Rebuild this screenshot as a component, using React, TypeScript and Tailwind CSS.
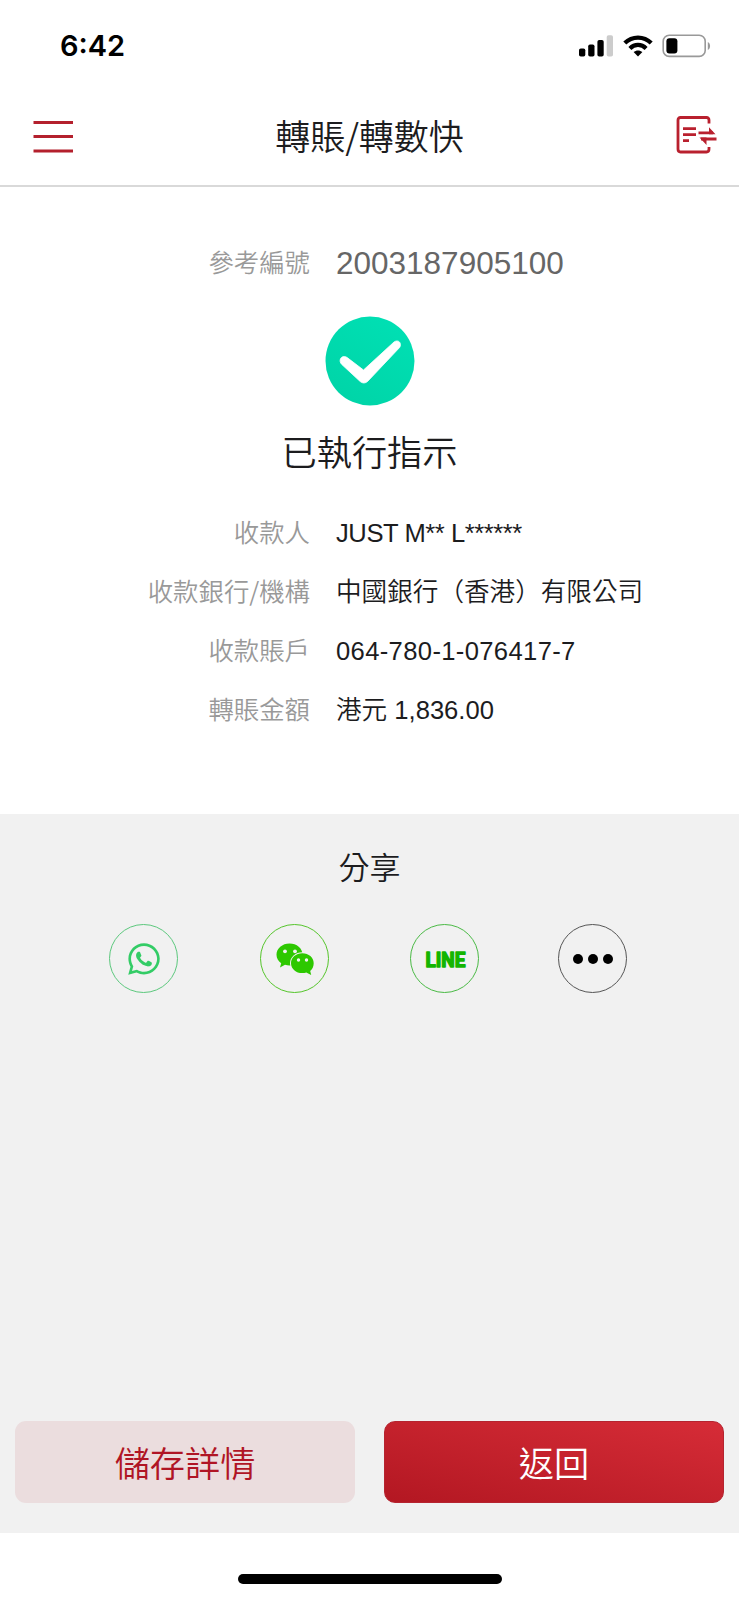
import { FaWhatsapp } from 'react-icons/fa';

const details = [
  { label: '收款人', value: 'JUST M** L******', spacing: 'tracking-[-0.45px]' },
  { label: '收款銀行/機構', value: '中國銀行（香港）有限公司', spacing: 'tracking-normal' },
  { label: '收款賬戶', value: '064-780-1-076417-7', spacing: 'tracking-[0.35px]' },
  { label: '轉賬金額', value: '港元 1,836.00', spacing: 'tracking-normal' },
];

export default function App() {
  return (
    <div className="flex h-[1600px] w-[739px] flex-col overflow-hidden bg-white font-['Liberation_Sans','Noto_Sans_CJK_TC',sans-serif] text-[#1c1c1e]">
      <StatusBar />
      <Header />

      <main className="flex h-[627px] shrink-0 flex-col pt-[57px]">
        <div className="flex h-10 items-center gap-[26px]">
          <span className="w-[310px] pb-[5px] text-right font-['Noto_Sans_CJK_TC',sans-serif] text-[25.4px] font-[350] text-[#999]">
            參考編號
          </span>
          <span className="text-[31.5px] text-[#666]">2003187905100</span>
        </div>

        <div className="mt-[32px] flex flex-col items-center">
          <SuccessIcon />
          <h2 className="mt-[20px] font-['Noto_Sans_CJK_TC',sans-serif] text-[35.2px] leading-[50px] font-[350]">
            已執行指示
          </h2>
        </div>

        <dl className="mt-[27px]">
          {details.map((row) => (
            <div key={row.label} className="flex h-[59px] items-center gap-[26px]">
              <dt className="w-[310px] pb-[2px] text-right font-['Noto_Sans_CJK_TC',sans-serif] text-[25.4px] font-[350] text-[#999]">
                {row.label}
              </dt>
              <dd className={`pt-px text-[25.6px] font-[350] whitespace-nowrap ${row.spacing}`}>{row.value}</dd>
            </div>
          ))}
        </dl>
      </main>

      <section className="flex h-[719px] shrink-0 flex-col bg-[#f1f1f1] px-[15px] pb-[30px]">
        <h3 className="mt-[27px] text-center font-['Noto_Sans_CJK_TC',sans-serif] text-[31px] leading-[50px] font-[350]">
          分享
        </h3>
        <div className="mt-[33px] flex pl-[94px]">
          <button className="flex size-[69px] items-center justify-center rounded-full border border-[#5cc87d]">
            <FaWhatsapp className="size-9 text-[#33cc66]" />
          </button>
          <button className="ml-[82px] flex size-[69px] items-center justify-center rounded-full border border-[#55c52b]">
            <WeChatIcon />
          </button>
          <button className="ml-[81px] flex size-[69px] items-center justify-center rounded-full border border-[#4aba45]">
            <svg className="shrink-0" width="66" height="40" viewBox="0 0 66 40">
              <text
                x="33.5"
                y="27.5"
                textAnchor="middle"
                textLength="40"
                lengthAdjust="spacingAndGlyphs"
                fill="#13b500"
                stroke="#13b500"
                strokeWidth="1.5"
                strokeLinejoin="round"
                className="font-['Roboto',sans-serif] text-[21px] font-bold"
              >
                LINE
              </text>
            </svg>
          </button>
          <button className="ml-[79px] flex size-[69px] items-center justify-center gap-[5px] rounded-full border border-[#555]">
            <span className="size-[10px] rounded-full bg-black" />
            <span className="size-[10px] rounded-full bg-black" />
            <span className="size-[10px] rounded-full bg-black" />
          </button>
        </div>

        <div className="mt-auto flex justify-between">
          <button className="h-[82px] w-[340px] rounded-[11px] bg-[#ebddde] font-['Noto_Sans_CJK_TC',sans-serif] text-[35.2px] leading-[50px] font-[350] text-[#b01525]">
            儲存詳情
          </button>
          <button className="h-[82px] w-[340px] rounded-[11px] border border-[#b52430] bg-linear-to-tr from-[#b31722] to-[#d62c37] font-['Noto_Sans_CJK_TC',sans-serif] text-[35.2px] leading-[50px] font-[350] text-white">
            返回
          </button>
        </div>
      </section>

      <div className="flex flex-1 justify-center pt-[41px]">
        <div className="h-[10px] w-[264px] rounded-full bg-black" />
      </div>
    </div>
  );
}

function StatusBar() {
  return (
    <div className="flex h-[92px] shrink-0 items-center justify-between pr-[27px] pl-[60px]">
      <span className="font-['Inter',sans-serif] text-[29px] font-semibold text-black">6:42</span>
      <div className="flex items-center">
        <svg width="34" height="22" viewBox="0 0 34 22">
          <rect x="0" y="13.5" width="6.3" height="8" rx="1.8" />
          <rect x="9.2" y="9.5" width="6.3" height="12" rx="1.8" />
          <rect x="18.4" y="5" width="6.3" height="16.5" rx="1.8" />
          <rect x="27.7" y="0.3" width="6.3" height="21.2" rx="1.8" fill="#ccc" />
        </svg>
        <svg className="ml-[10px]" width="30" height="22" viewBox="0 0 30 22" fill="none" stroke="#000">
          <path d="M1.8 8.1C9.2.7 20.8.7 28.2 8.1" strokeWidth="4.2" />
          <path d="M6.9 13.4C11.5 8.8 18.5 8.8 23.1 13.4" strokeWidth="4.2" />
          <path d="M15 21.5 10.6 17.1C13.1 15 16.9 15 19.4 17.1Z" fill="#000" stroke="none" />
        </svg>
        <svg className="ml-[9px]" width="50" height="24" viewBox="0 0 50 24">
          <rect x="1.2" y="1.2" width="42" height="21.2" rx="6" fill="none" stroke="#999" strokeWidth="1.6" />
          <rect x="4.4" y="4.2" width="11" height="15.2" rx="3" />
          <path d="M45.8 8C48.8 9.3 48.8 14.7 45.8 16Z" fill="#999" />
        </svg>
      </div>
    </div>
  );
}

function Header() {
  return (
    <header className="flex h-[95px] shrink-0 items-center border-b-2 border-[#d9d9d9] pr-[22px] pb-1 pl-[33px]">
      <svg width="40" height="34" viewBox="0 0 40 34" stroke="#b4202d" strokeWidth="2.8">
        <path d="M.5 2.5H40M.5 16.5H40M.5 31H40" />
      </svg>
      <h1 className="flex-1 pr-[10px] pb-[3px] text-center font-['Noto_Sans_CJK_TC',sans-serif] text-[35px] leading-[50px] font-[350]">
        轉賬/轉數快
      </h1>
      <svg className="-mt-[3px]" width="41" height="40" viewBox="0 0 41 40" fill="none" stroke="#b9202e" strokeWidth="2.8">
        <path d="M33 8.5V5Q33 2.5 30.5 2.5H4.500Q2 2.500 2 5V34Q2 37 4.500 37H30.500Q33 37 33 34V32" />
        <path d="M7 13.7H20M7 19.7H20M7 25.7H13" />
        <path d="M22.500 17.800H37M25 24H40.500" />
        <path d="M33 12.200 39.500 19.200H33ZM30.500 30 23.500 22.600H30.500Z" fill="#b9202e" stroke="none" />
      </svg>
    </header>
  );
}

function SuccessIcon() {
  return (
    <svg width="90" height="90" viewBox="0 0 90 90">
      <defs>
        <linearGradient id="success" x1="0.8" y1="0" x2="0.2" y2="1">
          <stop offset="0" stopColor="#00e0b4" />
          <stop offset="1" stopColor="#00d4a7" />
        </linearGradient>
      </defs>
      <circle cx="45" cy="45" r="44.5" fill="url(#success)" />
      <path
        d="M15.6 42.6C17 40.2 20 40 22.2 41.6L38.5 54 69 26C73.6 22.8 77.2 27.5 74.6 31.5L43 65C40.6 67.5 37.5 67.5 35.2 65.5L16.6 48.3C15.2 46.8 14.6 44.6 15.6 42.6Z"
        fill="#fff"
        stroke="#fff"
        strokeWidth="0.8"
      />
    </svg>
  );
}

function WeChatIcon() {
  return (
    <svg width="38" height="32" viewBox="0 0 38 32" fill="#2dc800">
      <path d="M13.5.5C6.3.5.5 5.4.5 11.7c0 3.5 1.8 6.4 4.7 8.5L4 24.6l5-2.8c1.4.5 2.9.8 4.5.8 7.2 0 13-4.9 13-11.1S20.7.5 13.5.5Z" />
      <ellipse cx="26.3" cy="20.2" rx="12.3" ry="11" fill="#f1f1f1" />
      <path d="M26.3 10.3c-6.3 0-11.3 4.3-11.3 9.9s5 9.9 11.3 9.9c1.5 0 2.8-.2 4-.6l4.9 2.5-1-4c2.2-1.8 3.5-4.5 3.5-7.8 0-5.6-5-9.9-11.4-9.9Z" />
      <g fill="#f1f1f1">
        <circle cx="9" cy="8.3" r="1.9" />
        <circle cx="19" cy="8.3" r="1.9" />
        <circle cx="22.5" cy="17" r="1.7" />
        <circle cx="30.5" cy="17" r="1.7" />
      </g>
    </svg>
  );
}
